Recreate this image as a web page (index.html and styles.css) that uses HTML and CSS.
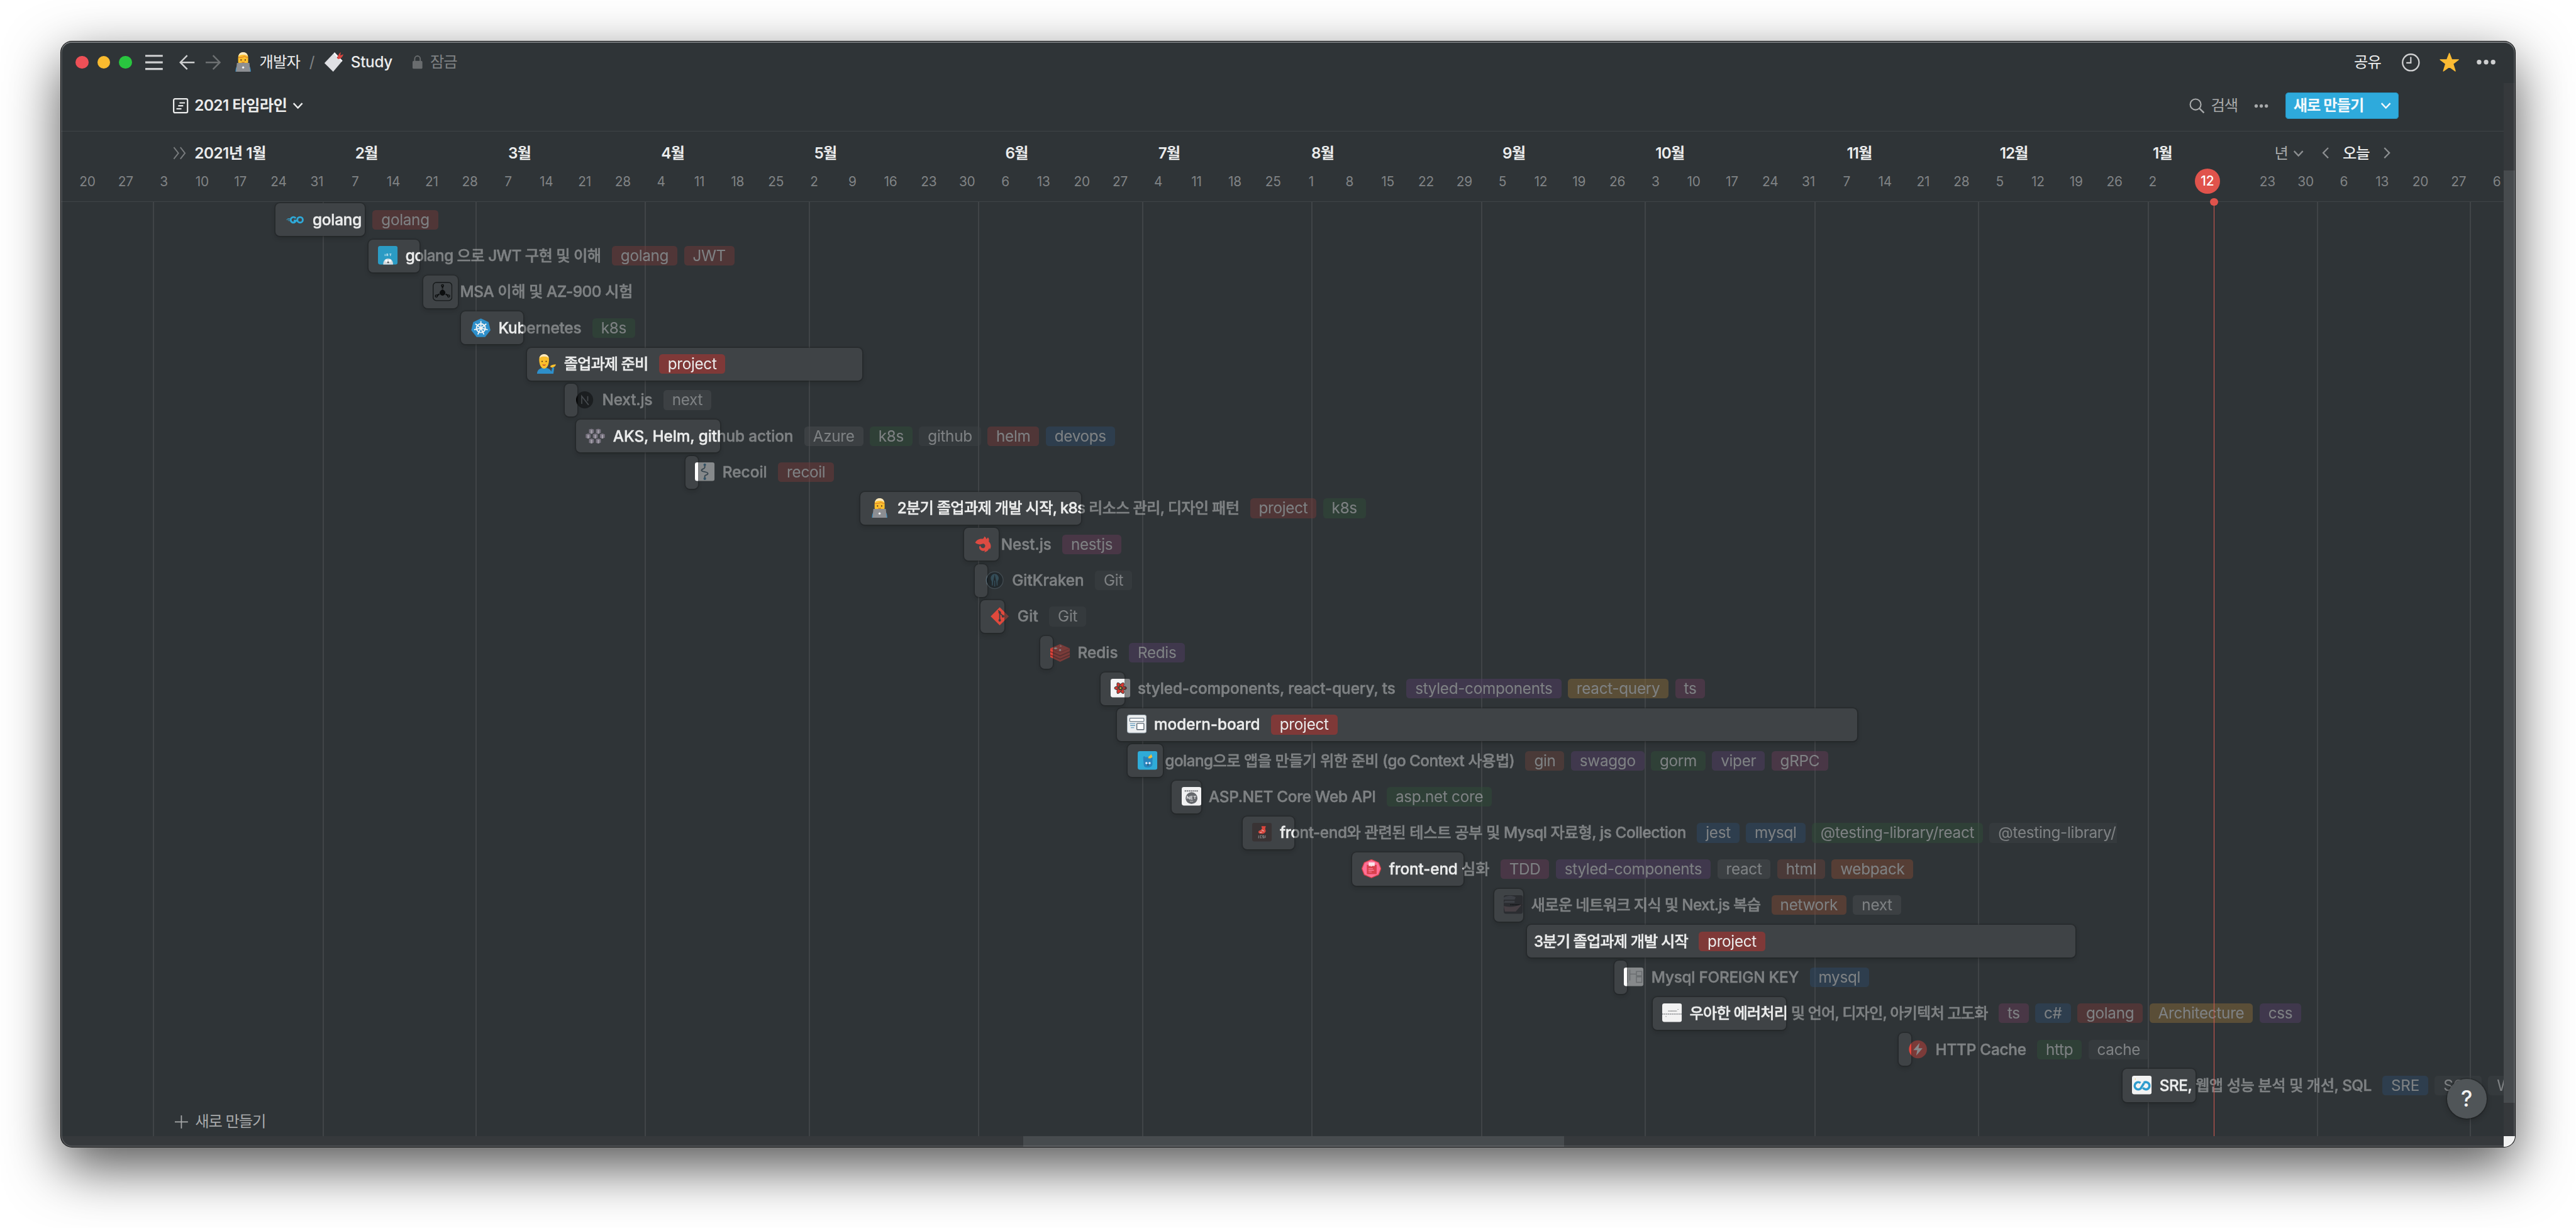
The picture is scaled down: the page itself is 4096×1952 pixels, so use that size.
FILE: index.html
```html
<!DOCTYPE html>
<html lang="ko">
<head>
<meta charset="utf-8">
<title>Study</title>
<link rel="stylesheet" href="styles.css">
</head>
<body>
<svg class="sprite" aria-hidden="true">
  <symbol id="i-coder" viewBox="0 0 18 18"><path d="M2 17.800c0-3 .8-5.600 3-6.300h8c2.200.7 3 3.300 3 6.300z" fill="#2e8fca"/><path d="M4.400 5.500C4.400 2 6 .1 9 .1s4.600 1.900 4.600 5.400v3.200C13.600 10.800 11.500 12 9 12S4.400 10.800 4.400 8.700z" fill="#fbbf2d"/><path d="M4.600 4C5 1.300 6.600 0 9 0s4 1.300 4.400 4c-1-1.200-2-1.700-4.400-1.700S5.600 2.800 4.600 4z" fill="#fbe9c0"/><path d="M4.800 4.900c2.700.1 4.500-.4 5.500-1.400.7.900 1.700 1.300 3 1.400" fill="none" stroke="#d5672f" stroke-width=".5"/><circle cx="7.100" cy="7.100" r=".65" fill="#4b2d1c"/><circle cx="10.900" cy="7.100" r=".65" fill="#4b2d1c"/><path d="M7.700 9.100q1.300.8 2.600 0" fill="none" stroke="#a6522a" stroke-width=".5"/><path d="M3.300 9.800h11.400l.8 8.100h-13z" fill="#8c8e92"/><circle cx="9" cy="14" r="1" fill="#f0f0f0"/></symbol>
  <symbol id="i-tip" viewBox="0 0 18 18"><path d="M.5 18c.2-3.200 2-5 5-5.300h3.700c2.300.3 3.900 1.600 4.300 3.300l1-4 1.800.3-.8 5.700z" fill="#2e8fca"/><path d="M2.500 5.200C2.500 1.800 4.200.2 7 .2s4.500 1.600 4.500 5c0 4-1.600 8-4.500 8s-4.500-4-4.500-8z" fill="#fbbf2d"/><path d="M2.700 3.600C3.200 1.200 4.800 0 7 0s3.800 1.200 4.300 3.600C10 2.500 9 2.200 7 2.200s-3 .3-4.300 1.400z" fill="#fbe9c0"/><circle cx="5.200" cy="6.600" r=".6" fill="#4b2d1c"/><circle cx="8.900" cy="6.600" r=".6" fill="#4b2d1c"/><path d="M5.700 9.500q1.300 1.200 2.600 0" fill="none" stroke="#c0392b" stroke-width=".7"/><path d="M12.600 11c1.200-1.300 3.200-1.700 5.200-1.600-.2 1.500-1.500 2.600-3.200 2.800-1.300.1-1.900-.4-2-1.200z" fill="#fbbf2d"/></symbol>
  <symbol id="i-card" viewBox="0 0 18 18"><path d="M9.800.2 17 7.800 8.500 17.800.5 10z" fill="#dfe0e4"/><path d="M9.800.2 17 7.800l-.8 1L9 1.400z" fill="#f5f5f7"/><circle cx="13" cy="4.900" r="1" fill="#a4343a"/><path d="M12.500 5.500c.3-2 1.200-4.500 3-5.500l-.5 3 2.800-1.200c-.5 2.200-2 4-4.600 4.600z" fill="#d7443e"/></symbol>
  <symbol id="i-go" viewBox="0 0 18 18"><g fill="none" stroke="#2fa9d8" stroke-width="1.700"><path d="M9.300 7.500a2.500 2.500 0 1 0 .3 2.200H7.500"/><circle cx="13.300" cy="8.900" r="2.500"/></g><path d="M1.800 7.800h2.400M.8 8.700h3M2.500 9.700h1.600" stroke="#2fa9d8" stroke-width=".5"/></symbol>
  <symbol id="i-jwt" viewBox="0 0 18 18"><rect width="18" height="17" rx="2" fill="#2b9bc4"/><path d="M6.500 9.200V7.300M8 9.200V7.300h1v1.900M10.500 7.300h1.800M11.400 7.300v1.900" stroke="#cfe9f2" stroke-width=".6" fill="none"/><path d="M4.800 17c0-3.200 1.500-5.500 4.500-5.500s4.500 2.300 4.500 5.500z" fill="#d5dadd"/><circle cx="7.700" cy="13.400" r="1.100" fill="#fff"/><circle cx="10.900" cy="13.400" r="1.100" fill="#fff"/><circle cx="9.300" cy="15" r=".8" fill="#4d5255"/></symbol>
  <symbol id="i-msa" viewBox="0 0 18 18"><rect x=".4" y=".6" width="17.200" height="16.600" rx="3" fill="none" stroke="#16191a" stroke-width=".8"/><path d="M9 9.500V3.500M9 9.500l-5.300 3.200M9 9.500l5.300 3.200" stroke="#111314" stroke-width="1.300" stroke-dasharray="2.600 .7"/><circle cx="9" cy="10" r="2.600" fill="#0c0e0f"/><g fill="none" stroke="#0c0e0f" stroke-width=".8"><circle cx="9" cy="3.500" r="1"/><circle cx="3.400" cy="13" r="1"/><circle cx="14.600" cy="13" r="1"/></g></symbol>
  <symbol id="i-k8s" viewBox="0 0 18 18"><path d="M9 .1 16 3.400l1.800 7.500-4.900 6.200H5.100L.2 10.900 2 3.400z" fill="#2e8fca"/><g stroke="#f0f3f5" fill="none" stroke-width="1.100"><circle cx="9" cy="9" r="4"/><path d="M9 2.600V9M9 9l5-4M9 9l6.200 1.400M9 9l2.800 5.800M9 9l-2.800 5.800M9 9l-6.200 1.400M9 9 4 5"/></g></symbol>
  <symbol id="i-next" viewBox="0 0 18 18"><circle cx="9" cy="9" r="7.800" fill="#000"/><path d="M6.300 12.600V5.600l6.300 8M11.800 5.600v4.500" fill="none" stroke="#666a6d" stroke-width="1"/></symbol>
  <symbol id="i-aks" viewBox="0 0 18 18"><g fill="#77727f"><path d="M3.200 2.600 5.500 2l2.200.8v3L5.500 6.700 3.200 6zM9.500 2.600l2.300-.6 2.200.8v3l-2.200.9L9.500 6zM.2 7l2.300-.6 2.200.8v3l-2.200.9L.2 10.400zM6.700 7 9 6.400l2.200.8v3l-2.200.9-2.300-.7zM13.200 7l2.300-.6 2.200.8v3l-2.200.9-2.300-.7zM3.200 11.500l2.300-.6 2.200.8v3l-2.200.9-2.300-.7zM9.500 11.500l2.300-.6 2.200.8v3l-2.200.9-2.300-.7z"/></g><path d="M5.500 3.200v3.300M11.800 3.200v3.300M2.500 7.600v3.300M9 7.600v3.300M15.500 7.600v3.300M5.500 12.100v3.300M11.800 12.100v3.300" stroke="#a5a1ab" stroke-width="1.300"/></symbol>
  <symbol id="i-recoil" viewBox="0 0 18 18"><rect width="18" height="17" rx="2" fill="#fff"/><path d="M9 2.500v2.300c0 1-3 1-3 2.500s5.500 1 5.800 2.700S9 11.500 9 12.500v2.300" fill="none" stroke="#46606f" stroke-width="1.100"/><circle cx="9" cy="2.200" r="1.200" fill="#3b7ea8"/><circle cx="9" cy="14.900" r="1.200" fill="#3b7ea8"/></symbol>
  <symbol id="i-nest" viewBox="0 0 18 18"><path d="M1.500 7.200C2.800 4.500 5.500 3.300 8.500 3.800 9.600 3.200 9.700 2.400 9.900 1.600c1.500.8 1.700 1.600 1.600 2.300 1-.3 1.500-1 1.700-1.600 1.200 1.500 1.200 2.900.7 3.800 2 2 2.800 5.500.8 7.600.1-.7 0-1.200-.2-1.600-.8 2.200-2.600 3.700-4.800 3.900.5-.5.800-.9.8-1.400-2.500.9-5-.6-5.300-2.600-.1-1 .3-1.600 1-2 .2 1.500 1.500 2.600 3 2.200 1.700-.5 2-2.800.5-3.700-1.300-.8-2.600.8-4.300.4C3.900 8.500 2.600 8.300 1.500 7.200z" fill="#dc4b42"/></symbol>
  <symbol id="i-kraken" viewBox="0 0 18 18"><circle cx="9" cy="8.800" r="7.700" fill="#101a20" stroke="#62727c" stroke-width=".7"/><path d="M9 3.500c2 0 3.200 1.700 3.200 3.600 0 1.600-1 2-1 3v3.600M9 3.500c-2 0-3.200 1.700-3.200 3.600 0 1.600 1 2 1 3v3.600M9 9v5.500" fill="#3c6f86" stroke="#3c6f86" stroke-width=".9"/></symbol>
  <symbol id="i-git" viewBox="0 0 18 18"><path d="M9 .7 17.300 9 9 17.300.7 9z" fill="#e0493c"/><path d="M7.600 3.600 9 5v8M9 6l3.200 3" stroke="#3d3e40" stroke-width="1" fill="none"/><g fill="#3d3e40"><circle cx="9" cy="5.500" r="1.200"/><circle cx="12" cy="9" r="1.200"/><circle cx="9" cy="12.700" r="1.200"/></g></symbol>
  <symbol id="i-redis" viewBox="0 0 18 18"><path d="M0 5 9 1l9 4v8l-9 4.200L0 13z" fill="#e0453b"/><path d="m0 8 9 3.800L18 8M0 11l9 3.800 9-3.800" fill="none" stroke="#8e2a27" stroke-width="1"/><path d="m0 5 9 3.700L18 5" fill="none" stroke="#a83430" stroke-width=".6"/><path d="m3 4.900 2-.8 1.800.8-2 .8zM8.500 3.200l1-.9 1.200.9z" fill="#fff"/><circle cx="9" cy="6.500" r=".9" fill="#fff"/></symbol>
  <symbol id="i-rq" viewBox="0 0 18 18"><rect width="18" height="17" rx="2" fill="#f3f3f4"/><g fill="#d9362f" stroke="#44403f" stroke-width=".6"><ellipse cx="9" cy="8.500" rx="5.600" ry="2"/><ellipse cx="9" cy="8.500" rx="5.600" ry="2" transform="rotate(60 9 8.500)"/><ellipse cx="9" cy="8.500" rx="5.600" ry="2" transform="rotate(120 9 8.500)"/></g><circle cx="9" cy="8.500" r="1.900" fill="#3f4437"/><circle cx="9" cy="8.500" r=".7" fill="#e6c13b"/></symbol>
  <symbol id="i-board" viewBox="0 0 18 18"><rect x=".3" y=".3" width="17.400" height="16.400" rx="2" fill="#eceef0" stroke="#a8b4bd" stroke-width=".6"/><rect x="2.500" y="3.300" width="13" height="3" rx=".5" fill="#fff" stroke="#6b7a86" stroke-width=".7"/><rect x="9" y="8" width="6.500" height="5.700" rx=".5" fill="#fff" stroke="#596570" stroke-width=".8"/><path d="M2.600 8.200h5M3 10h4.500M3.500 12h3" stroke="#4f90b5" stroke-width=".6"/></symbol>
  <symbol id="i-gopher" viewBox="0 0 18 18"><rect width="18" height="17" rx="2" fill="#2fabd8"/><path d="M5 6c0-1.500 1.500-1.500 2-.5h4.500L13 5c1 1 .5 2 .5 4v3c0 2-2 3-4.500 3s-3.500-1-3.500-3z" fill="#2784bd"/><path d="M9.500 6.300c.5-1.500 1-2 2-2.200l.8-1.500 1.200 2.700c-1.300 1.400-2.600 1.600-4 1z" fill="#f3bd3a"/><circle cx="8" cy="11" r="1" fill="#eef"/><circle cx="10.900" cy="11" r="1" fill="#eef"/><circle cx="9.400" cy="12.500" r=".6" fill="#4a3b2d"/></symbol>
  <symbol id="i-net" viewBox="0 0 18 18"><rect width="18" height="17" rx="2" fill="#f1f1f2"/><path d="M2.700 3.600h12.500" stroke="#87898c" stroke-width="1.300" stroke-dasharray="1.300 .5"/><circle cx="9" cy="10.200" r="5.400" fill="#66696d"/><path d="M5 11V8.500L7 11V8.500M10 8.500H8.200V11H10M8.200 9.700h1.500M10.700 8.500h2.600M12 8.500V11" fill="none" stroke="#f1f1f2" stroke-width=".6"/><path d="M7.500 13h3" stroke="#c4c5c7" stroke-width=".6"/></symbol>
  <symbol id="i-jest" viewBox="0 0 18 18"><rect width="18" height="17" rx="2" fill="#393334"/><path d="M8.500 3h4l-.6 2.300.6 2.200c-.5 2-2.200 2.600-4 2.500-1.800 0-2.800-.6-2.800-1.600 0-.9.7-1.400 1.700-1.500l1.600-1.500z" fill="#d9463d"/><path d="M8.800 6.500l2.200 1.200M7 9l2-.5" stroke="#e8c3bd" stroke-width=".6"/><path d="M6 11.500v2.200H5.500M8.800 11.700H7.500v2h1.300M11 11.700H9.600v1h1.300v1H9.500M12 11.300v2.500" fill="none" stroke="#7b7d7e" stroke-width=".7"/></symbol>
  <symbol id="i-front" viewBox="0 0 18 18"><path d="M9 .2 15.500 3l2.200 5.500-2.200 5.600L9 16.900 2.500 14.100.3 8.500 2.500 3z" fill="#ff6f96" stroke="#d6434a" stroke-width=".8"/><path d="M4.800 5h9v8.500h-9z" fill="#d9404c"/><path d="M6.500 2.800h5.500V6H9.500l-1 1V6h-2z" fill="#fbe5ea"/><path d="M6.300 8.500h4M6.300 10h5M6.300 11.500h3" stroke="#ff8ba8" stroke-width=".6"/></symbol>
  <symbol id="i-net2" viewBox="0 0 18 18"><rect width="17.500" height="17" rx="2" fill="#2b2d31"/><path d="M0 2c4-2 8-2 11 0l-1 2H0zM1 5h9v2H0z" fill="#3c3f45"/><path d="M6 8.800h11" stroke="#111214" stroke-width=".8" stroke-dasharray="1 .4"/><path d="M0 10c5 1 10 1 17-2l-6 7H1z" fill="#463f44"/></symbol>
  <symbol id="i-fk" viewBox="0 0 18 18"><rect width="18" height="17" rx="2" fill="#fff"/><path d="M3.500 2v12M5.500 2v10M11.500 3.500h5v4h-5zM11.500 8.500h5v5h-5zM5.500 6h6" fill="none" stroke="#b4b6b8" stroke-width=".8"/></symbol>
  <symbol id="i-err" viewBox="0 0 18 18"><rect width="18" height="17" rx="2" fill="#f2f2f2"/><path d="M5.500 7h8" stroke="#77797b" stroke-width=".8" stroke-dasharray="1 .3"/><path d="M0 9.700h18" stroke="#9b9da0" stroke-width=".9" stroke-dasharray="1.300 .4"/><path d="M3 12h1M14 5.500h1" stroke="#9b9da0" stroke-width=".6"/></symbol>
  <symbol id="i-http" viewBox="0 0 18 18"><circle cx="9" cy="8.600" r="8.200" fill="#e4443c"/><path d="M10.500 2.800 4.800 9.400h3.600l-1 5 5.800-6.800H9.500z" fill="#fff"/></symbol>
  <symbol id="i-sre" viewBox="0 0 18 18"><rect width="18" height="17" rx="2" fill="#f3f3f3"/><g fill="none" stroke="#2f9ccd" stroke-width="2.100"><path d="M7.800 6.600A3.300 3.300 0 1 0 8 11.600L11 6.800"/><path d="M10 11a3.300 3.300 0 1 0 .8-4.500"/></g><circle cx="3" cy="3" r=".4" fill="#e6c13b"/></symbol>
  <symbol id="i-chev" viewBox="0 0 10 10"><path d="m1 3 4 4.200L9 3" fill="none" stroke="currentColor" stroke-width="1.400"/></symbol>
  <symbol id="i-dots" viewBox="0 0 20 6"><g fill="currentColor"><circle cx="3" cy="3" r="2.300"/><circle cx="10" cy="3" r="2.300"/><circle cx="17" cy="3" r="2.300"/></g></symbol>
</svg>

<main class="window">
  <header class="titlebar">
    <div class="lights"><i class="light red"></i><i class="light amber"></i><i class="light lime"></i></div>
    <svg class="menu" viewBox="0 0 16 14"><path d="M0 1h16M0 7h16M0 13h16" stroke="currentColor" stroke-width="1.800"/></svg>
    <svg class="arrow back" viewBox="0 0 14 14"><path d="M14 7H1M7.300.7 1 7l6.300 6.300" fill="none" stroke="currentColor" stroke-width="1.400"/></svg>
    <svg class="arrow fwd" viewBox="0 0 14 14"><path d="M0 7h13M6.700.7 13 7l-6.300 6.300" fill="none" stroke="currentColor" stroke-width="1.400"/></svg>
    <svg class="ico crumb-ico"><use href="#i-coder"/></svg>
    <span class="crumb">개발자</span>
    <span class="slash">/</span>
    <svg class="ico"><use href="#i-card"/></svg>
    <span class="crumb page">Study</span>
    <svg class="lock" viewBox="0 0 10 14"><path d="M2.200 7V3.600a2.800 2.800 0 0 1 5.600 0V7" fill="none" stroke="currentColor" stroke-width="1.200"/><rect y="5.800" width="10" height="8" rx="1.200" fill="currentColor"/></svg>
    <span class="locked">잠금</span>
    <div class="actions">
      <span>공유</span>
      <svg class="clock" viewBox="0 0 16 16"><circle cx="8" cy="8" r="7.300" fill="none" stroke="currentColor" stroke-width="1.300"/><path d="M8 3v5.300H4" fill="none" stroke="currentColor" stroke-width="1.200"/></svg>
      <svg class="star" viewBox="0 0 18 18"><path d="m9 .4 2.300 6h6.400l-5.200 3.900 2.100 6.900L9 13.200l-5.600 4 2.100-6.900L.3 6.400h6.400z" fill="#fbbb33" stroke="#fbbb33" stroke-width=".8" stroke-linejoin="round"/></svg>
      <svg class="dots"><use href="#i-dots"/></svg>
    </div>
  </header>

  <div class="scroller">
    <section class="view">
      <div class="toolbar">
        <svg class="view-ico" viewBox="0 0 14 14"><rect x=".65" y=".65" width="12.700" height="12.700" rx="1.200" fill="none" stroke="currentColor" stroke-width="1.300"/><path d="M6 4.300h5M4.800 7h4.600M3.200 9.800h4.600" stroke="currentColor" stroke-width="1.200"/></svg>
        <b class="view-name">2021 타임라인</b>
        <svg class="chev"><use href="#i-chev"/></svg>
        <div class="tools">
          <svg class="search" viewBox="0 0 14 14"><circle cx="5.800" cy="5.800" r="4.900" fill="none" stroke="currentColor" stroke-width="1.200"/><path d="m9.400 9.400 4.100 4.100" stroke="currentColor" stroke-width="1.400"/></svg>
          <span class="search-text">검색</span>
          <svg class="more"><use href="#i-dots"/></svg>
          <button class="new"><span>새로 만들기</span><svg class="chev"><use href="#i-chev"/></svg></button>
        </div>
      </div>

      <div class="scale">
        <div class="months">
          <span class="first"><svg class="expand" viewBox="0 0 12 12"><path d="M.8.700 5 6 .8 11.300M6.800.700 11 6l-4.200 5.300" fill="none" stroke="currentColor" stroke-width="1.100"/></svg>2021년 1월</span>
          <span style="--week:8">2월</span><span style="--week:12">3월</span><span style="--week:16">4월</span><span style="--week:20">5월</span><span style="--week:25">6월</span><span style="--week:29">7월</span><span style="--week:33">8월</span><span style="--week:38">9월</span><span style="--week:42">10월</span><span style="--week:47">11월</span><span style="--week:51">12월</span><span style="--week:55">1월</span>
          <div class="range">
            <span class="unit">년</span><svg class="chev"><use href="#i-chev"/></svg>
            <svg class="nav" viewBox="0 0 6 10"><path d="M5.400.6 1 5l4.400 4.400" fill="none" stroke="currentColor" stroke-width="1.200"/></svg>
            <span class="now">오늘</span>
            <svg class="nav" viewBox="0 0 6 10"><path d="M.6.600 5 5 .6 9.400" fill="none" stroke="currentColor" stroke-width="1.200"/></svg>
          </div>
        </div>
        <div class="weeks">
          <span>20</span><span>27</span><span>3</span><span>10</span><span>17</span><span>24</span><span>31</span><span>7</span><span>14</span><span>21</span><span>28</span><span>7</span><span>14</span><span>21</span><span>28</span><span>4</span><span>11</span><span>18</span><span>25</span><span>2</span><span>9</span><span>16</span><span>23</span><span>30</span><span>6</span><span>13</span><span>20</span><span>27</span><span>4</span><span>11</span><span>18</span><span>25</span><span>1</span><span>8</span><span>15</span><span>22</span><span>29</span><span>5</span><span>12</span><span>19</span><span>26</span><span>3</span><span>10</span><span>17</span><span>24</span><span>31</span><span>7</span><span>14</span><span>21</span><span>28</span><span>5</span><span>12</span><span>19</span><span>26</span><span>2</span><span class="today"><b>12</b></span><span>23</span><span>30</span><span>6</span><span>13</span><span>20</span><span>27</span><span>6</span>
        </div>
      </div>

      <div class="chart">
        <div class="grid"><i style="--days:31"></i><i style="--days:28"></i><i style="--days:31"></i><i style="--days:30"></i><i style="--days:31"></i><i style="--days:30"></i><i style="--days:31"></i><i style="--days:31"></i><i style="--days:30"></i><i style="--days:31"></i><i style="--days:30"></i><i style="--days:31"></i><i style="--days:31"></i><i style="--days:28"></i><i style="--days:6"></i></div>
        <div class="rows">
          <div class="row" style="--x:19.600;--w:8.200"><i class="bar"></i><div class="item" style="--ls:-.0085em"><svg class="ico"><use href="#i-go"/></svg><span class="title">golang</span><span class="tag c-red">golang</span></div></div>
          <div class="row" style="--x:28.100;--w:4.700"><i class="bar"></i><div class="item" style="--ls:-.023em"><svg class="ico"><use href="#i-jwt"/></svg><span class="title">golang 으로 JWT 구현 및 이해</span><span class="tag c-red">golang</span><span class="tag c-red">JWT</span></div></div>
          <div class="row" style="--x:33.100;--w:3.200"><i class="bar"></i><div class="item" style="--ls:-.0188em"><svg class="ico"><use href="#i-msa"/></svg><span class="title">MSA 이해 및 AZ-900 시험</span></div></div>
          <div class="row" style="--x:36.600;--w:5.700"><i class="bar"></i><div class="item" style="--ls:-.0078em"><svg class="ico"><use href="#i-k8s"/></svg><span class="title">Kubernetes</span><span class="tag c-green">k8s</span></div></div>
          <div class="row" style="--x:42.600;--w:30.700"><i class="bar"></i><div class="item" style="--ls:-.041em"><svg class="ico"><use href="#i-tip"/></svg><span class="title">졸업과제 준비</span><span class="tag c-red">project</span></div></div>
          <div class="row" style="--x:46.100;--w:1.150"><i class="bar"></i><div class="item" style="--ls:-.0065em"><svg class="ico"><use href="#i-next"/></svg><span class="title">Next.js</span><span class="tag c-gray">next</span></div></div>
          <div class="row" style="--x:47.100;--w:13.200"><i class="bar"></i><div class="item" style="--ls:-.0034em"><svg class="ico"><use href="#i-aks"/></svg><span class="title">AKS, Helm, github action</span><span class="tag c-gray">Azure</span><span class="tag c-green">k8s</span><span class="tag c-light">github</span><span class="tag c-red">helm</span><span class="tag c-blue">devops</span></div></div>
          <div class="row" style="--x:57.100;--w:1.150"><i class="bar"></i><div class="item" style="--ls:.0036em"><svg class="ico"><use href="#i-recoil"/></svg><span class="title">Recoil</span><span class="tag c-red">recoil</span></div></div>
          <div class="row" style="--x:73.100;--w:20.200"><i class="bar"></i><div class="item" style="--ls:-.0325em"><svg class="ico"><use href="#i-coder"/></svg><span class="title">2분기 졸업과제 개발 시작, k8s 리소스 관리, 디자인 패턴</span><span class="tag c-red">project</span><span class="tag c-green">k8s</span></div></div>
          <div class="row" style="--x:82.600;--w:3.200"><i class="bar"></i><div class="item" style="--ls:-.0044em"><svg class="ico"><use href="#i-nest"/></svg><span class="title">Nest.js</span><span class="tag c-pink">nestjs</span></div></div>
          <div class="row" style="--x:83.600;--w:1.150"><i class="bar"></i><div class="item" style="--ls:.0011em"><svg class="ico"><use href="#i-kraken"/></svg><span class="title">GitKraken</span><span class="tag c-light">Git</span></div></div>
          <div class="row" style="--x:84.100;--w:2.200"><i class="bar"></i><div class="item" style="--ls:.0058em"><svg class="ico"><use href="#i-git"/></svg><span class="title">Git</span><span class="tag c-light">Git</span></div></div>
          <div class="row" style="--x:89.600;--w:1.150"><i class="bar"></i><div class="item" style="--ls:.0025em"><svg class="ico"><use href="#i-redis"/></svg><span class="title">Redis</span><span class="tag c-purple">Redis</span></div></div>
          <div class="row" style="--x:95.100;--w:2.200"><i class="bar"></i><div class="item" style="--ls:-.0035em"><svg class="ico"><use href="#i-rq"/></svg><span class="title">styled-components, react-query, ts</span><span class="tag c-purple">styled-components</span><span class="tag c-yellow">react-query</span><span class="tag c-pink">ts</span></div></div>
          <div class="row" style="--x:96.600;--w:67.700"><i class="bar"></i><div class="item" style="--ls:-.0015em"><svg class="ico"><use href="#i-board"/></svg><span class="title">modern-board</span><span class="tag c-red">project</span></div></div>
          <div class="row" style="--x:97.600;--w:3.200"><i class="bar"></i><div class="item" style="--ls:-.0228em"><svg class="ico"><use href="#i-gopher"/></svg><span class="title">golang으로 앱을 만들기 위한 준비 (go Context 사용법)</span><span class="tag c-brown">gin</span><span class="tag c-purple">swaggo</span><span class="tag c-green">gorm</span><span class="tag c-purple">viper</span><span class="tag c-pink">gRPC</span></div></div>
          <div class="row" style="--x:101.600;--w:2.700"><i class="bar"></i><div class="item" style="--ls:-.0109em"><svg class="ico"><use href="#i-net"/></svg><span class="title">ASP.NET Core Web API</span><span class="tag c-green">asp.net core</span></div></div>
          <div class="row" style="--x:108.100;--w:4.700"><i class="bar"></i><div class="item" style="--ls:-.0178em"><svg class="ico"><use href="#i-jest"/></svg><span class="title">front-end와 관련된 테스트 공부 및 Mysql 자료형, js Collection</span><span class="tag c-blue">jest</span><span class="tag c-blue">mysql</span><span class="tag c-green">@testing-library/react</span><span class="tag c-light cut">@testing-library/</span></div></div>
          <div class="row" style="--x:118.100;--w:10.200"><i class="bar"></i><div class="item" style="--ls:-.0066em"><svg class="ico"><use href="#i-front"/></svg><span class="title">front-end 심화</span><span class="tag c-pink">TDD</span><span class="tag c-purple">styled-components</span><span class="tag c-gray">react</span><span class="tag c-brown">html</span><span class="tag c-orange">webpack</span></div></div>
          <div class="row" style="--x:131.100;--w:2.700"><i class="bar"></i><div class="item" style="--ls:-.0293em"><svg class="ico"><use href="#i-net2"/></svg><span class="title">새로운 네트워크 지식 및 Next.js 복습</span><span class="tag c-orange">network</span><span class="tag c-gray">next</span></div></div>
          <div class="row" style="--x:134.100;--w:50.200"><i class="bar"></i><div class="item" style="--ls:-.0397em"><span class="title">3분기 졸업과제 개발 시작</span><span class="tag c-red">project</span></div></div>
          <div class="row" style="--x:142.100;--w:1.150"><i class="bar"></i><div class="item" style="--ls:-.0097em"><svg class="ico"><use href="#i-fk"/></svg><span class="title">Mysql FOREIGN KEY</span><span class="tag c-blue">mysql</span></div></div>
          <div class="row" style="--x:145.600;--w:12.200"><i class="bar"></i><div class="item" style="--ls:-.0388em"><svg class="ico"><use href="#i-err"/></svg><span class="title">우아한 에러처리 및 언어, 디자인, 아키텍처 고도화</span><span class="tag c-pink">ts</span><span class="tag c-blue">c#</span><span class="tag c-red">golang</span><span class="tag c-yellow">Architecture</span><span class="tag c-purple">css</span></div></div>
          <div class="row" style="--x:168.100;--w:1.150"><i class="bar"></i><div class="item" style="--ls:-.0098em"><svg class="ico"><use href="#i-http"/></svg><span class="title">HTTP Cache</span><span class="tag c-green">http</span><span class="tag c-light">cache</span></div></div>
          <div class="row" style="--x:188.600;--w:6.700"><i class="bar"></i><div class="item" style="--ls:-.0211em"><svg class="ico"><use href="#i-sre"/></svg><span class="title">SRE, 웹앱 성능 분석 및 개선, SQL</span><span class="tag c-blue">SRE</span><span class="tag c-light">SQL</span><span class="tag c-light">Web</span></div></div>
        </div>
        <i class="today-line"></i>
        <div class="add"><svg viewBox="0 0 12 12"><path d="M6 0v12M0 6h12" stroke="currentColor" stroke-width="1"/></svg><span>새로 만들기</span></div>
        <button class="help">?</button>
      </div>
    </section>
    <div class="vbar"><i></i></div>
    <div class="hbar"><i></i></div>
    <div class="corner"></div>
  </div>
</main>
</body>
</html>
```
FILE: styles.css
```css
/* 1rem = 10 interface points */
html { font-size: 17.378px; background: #fff; }

* { box-sizing: border-box; }

body {
  margin: 0;
  height: 100vh;
  overflow: hidden;
  padding: 3.800rem 0 0 5.600rem;
  background: #fff;
  color: #ebecec;
  font: 1.400rem/1.800rem Inter, "Noto Sans CJK KR", sans-serif;
  white-space: nowrap;
}

svg { display: block; flex: none; overflow: visible; }
i { font-style: normal; display: block; }
button { border: 0; margin: 0; font: inherit; color: inherit; }
.sprite { position: absolute; width: 0; height: 0; }

.window {
  width: 224.500rem;
  height: 101.100rem;
  display: flex;
  flex-direction: column;
  background: #2f3437;
  border-radius: 1rem;
  overflow: hidden;
  box-shadow: 0 0 0 1px #0b0c0d, 0 1.800rem 5rem rgba(0, 0, 0, .68);
  position: relative;
}
/* thin highlight that runs inside the window edge */
.window::after {
  content: "";
  position: absolute;
  inset: 0;
  border-radius: 1rem;
  box-shadow: inset 0 .1rem 0 rgba(255, 255, 255, .3), inset 0 0 0 2px rgba(255, 255, 255, .14);
  pointer-events: none;
}

/* title bar */
.titlebar { height: 3.800rem; flex: none; display: flex; align-items: center; padding: 0 1.700rem 0 1.300rem; }
.lights { display: flex; gap: .8rem; }
.light { width: 1.200rem; height: 1.200rem; border-radius: 50%; }
.red { background: #ee5057; }
.amber { background: #fabb2f; }
.lime { background: #29c63f; }
.menu { width: 1.600rem; height: 1.400rem; margin-left: 1.200rem; color: #cfd0d1; }
.arrow { width: 1.400rem; height: 1.400rem; color: #cfd0d1; }
.back { margin-left: 1.500rem; }
.fwd { margin-left: 1rem; color: #6d7072; }
.ico { width: 1.800rem; height: 1.800rem; }
.crumb-ico { margin-left: 1.150rem; }
.crumb { margin-left: .6rem; letter-spacing: -.039em; }
.slash { margin: 0 .85rem 0 .85rem; color: #7f8284; }
.page { font-weight: 500; margin-left: .65rem; letter-spacing: -.012em; }
.lock { width: .9rem; height: 1.350rem; margin-left: 1.850rem; color: #696c6e; }
.locked { margin-left: .7rem; color: #7f8284; letter-spacing: -.04em; }
.actions { margin-left: auto; display: flex; align-items: center; color: #cfd0d1; }
.actions span { color: #ebecec; letter-spacing: -.04em; }
.clock { width: 1.650rem; height: 1.650rem; margin-left: 1.900rem; }
.star { width: 1.800rem; height: 1.750rem; margin-left: 1.800rem; }
.dots { width: 1.850rem; height: .55rem; margin-left: 1.550rem; }

/* scroll area: the view plus its two scrollbars */
.scroller { flex: 1; min-height: 0; display: grid; grid-template: 1fr 1rem / 1fr 1rem; }
.view { min-width: 0; min-height: 0; display: flex; flex-direction: column; overflow: hidden; }
.vbar { background: #36393c; padding-top: 8rem; }
.vbar i { height: 85.300rem; background: #474b4e; }
.hbar { background: #36393c; padding-left: 88rem; }
.hbar i { width: 49.500rem; height: 100%; background: #474b4e; }
.corner { background: #f2f2f2; }

.toolbar { height: 4.400rem; flex: none; display: flex; align-items: center; padding: 0 9.600rem .2rem 10.200rem; border-bottom: .1rem solid #3f4447; }
.view-ico { width: 1.400rem; height: 1.400rem; }
.view-name { font-weight: 600; margin-left: .6rem; letter-spacing: -.024em; }
.chev { width: 1rem; height: 1rem; }
.view-name + .chev { margin-left: .5rem; }
.tools { margin-left: auto; display: flex; align-items: center; color: #a7a9aa; }
.search { width: 1.400rem; height: 1.400rem; }
.search-text { margin-left: .6rem; letter-spacing: -.04em; }
.more { width: 1.450rem; height: .4rem; margin-left: 1.450rem; }
.new { display: flex; align-items: center; height: 2.400rem; width: 10.400rem; margin-left: 1.450rem; padding: 0 0 0 .75rem; border-radius: .3rem; background: #2eaadc; color: #f2f8fb; box-shadow: inset 0 0 0 .05rem #2790bb; font-weight: 600; letter-spacing: -.045em; }
.new span { width: 7.300rem; text-align: left; }
.new .chev { margin-left: .65rem; }

/* time scale */
.scale { height: 6.500rem; flex: none; border-bottom: .1rem solid #3f4447; display: flex; flex-direction: column; }
.months { height: 3.400rem; display: grid; grid-template-columns: repeat(63, 3.500rem); align-items: center; padding: .6rem 0 0 2.400rem; font-weight: 600; overflow: hidden; }
.months > * { grid-row: 1; grid-column: var(--week) / span 2; letter-spacing: -.04em; }
.months .first { --week: 3; grid-column-end: span 3; display: flex; align-items: center; padding-left: .8rem; gap: .8rem; letter-spacing: -.022em; }
.expand { width: 1.200rem; height: 1.200rem; color: #797c7e; }
.months .range { grid-column: 58 / span 4; display: flex; align-items: center; padding-left: .65rem; color: #8c8f91; font-weight: 400; }
.range .unit { color: #a7a9aa; }
.range .unit + .chev { margin-left: .45rem; }
.range .nav { width: .65rem; height: 1.050rem; margin-left: 1.650rem; }
.range .now { margin-left: 1.250rem; color: #ebecec; font-weight: 500; }
.range .now + .nav { margin-left: 1.300rem; }
.weeks { display: grid; grid-template-columns: repeat(64, 3.500rem); margin-left: .65rem; height: 2.400rem; align-items: center; text-align: center; font-size: 1.200rem; color: #808385; letter-spacing: -.01em; }
.today { grid-column: span 2; padding-left: 2.100rem; }
.today b { display: block; width: 2.300rem; height: 2.300rem; line-height: 2.300rem; border-radius: 50%; background: #e0534c; color: #fff; font-weight: 500; }

/* timeline: every layer shares the single grid cell */
.chart { flex: 1; min-height: 0; display: grid; grid-template: 100% / 100%; }
.chart > * { grid-area: 1 / 1; }
.grid { display: flex; margin-left: 8.400rem; overflow: hidden; }
.grid i { flex: none; width: calc(var(--days) * .5rem); border-left: .12rem solid #404447; }
.rows { padding-top: .1rem; overflow: hidden; }
.row { display: grid; grid-template: 3rem / 80rem; height: 3.300rem; margin-left: calc(var(--x) * 1rem); }
.row > * { grid-area: 1 / 1; }
.bar { width: calc(var(--w) * 1rem); background: #3f4346; border-radius: .4rem; box-shadow: 0 0 0 .1rem rgba(15, 15, 15, .2), 0 .2rem .4rem rgba(15, 15, 15, .2); }
/* whatever runs past the end of its bar is faded */
.item {
  display: flex;
  align-items: center;
  padding-left: .9rem;
  overflow: hidden;
  position: relative;
  mask-image: linear-gradient(to right, #000 calc(var(--w) * 1rem), rgba(0, 0, 0, .42) calc(var(--w) * 1rem));
}
.title { flex: none; margin-right: 1rem; font-weight: 500; letter-spacing: var(--ls); -webkit-text-stroke: .025rem currentColor; }
.ico + .title { margin-left: .7rem; }
.item > .title:first-child { margin-left: -.25rem; }
.tag { flex: none; height: 1.800rem; line-height: 1.800rem; margin-right: .6rem; padding: 0 .8rem; border-radius: .3rem; letter-spacing: -.013em; }
.tag.cut { flex: 1; padding-right: 0; margin-right: 0; border-radius: .3rem 0 0 .3rem; }
.c-red { background: #7f3938; }
.c-green { background: #2f5038; }
.c-gray { background: #4e5154; }
.c-light { background: #3f4245; }
.c-blue { background: #2d4d6d; }
.c-purple { background: #573f6b; }
.c-pink { background: #6d3c5a; }
.c-brown { background: #6f423a; }
.c-orange { background: #8c4c32; }
.c-yellow { background: #967237; }

.today-line { width: 1px; margin-left: 196.950rem; background: #d65a52; position: relative; }
.today-line::before { content: ""; position: absolute; top: -.4rem; left: -.32rem; width: .7rem; height: .7rem; border-radius: 50%; background: #e0534c; }
.add { align-self: end; display: flex; align-items: center; gap: .65rem; padding: 0 0 .4rem 10.400rem; color: #a7a9aa; letter-spacing: -.045em; }
.add svg { width: 1.200rem; height: 1.200rem; }
.help { place-self: end; margin: 0 1.600rem 1.600rem 0; width: 3.600rem; height: 3.600rem; border-radius: 50%; background: #505558; color: #f2f2f2; font-size: 2rem; font-weight: 500; box-shadow: 0 0 0 .1rem rgba(15, 15, 15, .25), 0 .2rem .5rem rgba(15, 15, 15, .3); padding: 0; position: relative; }
```
